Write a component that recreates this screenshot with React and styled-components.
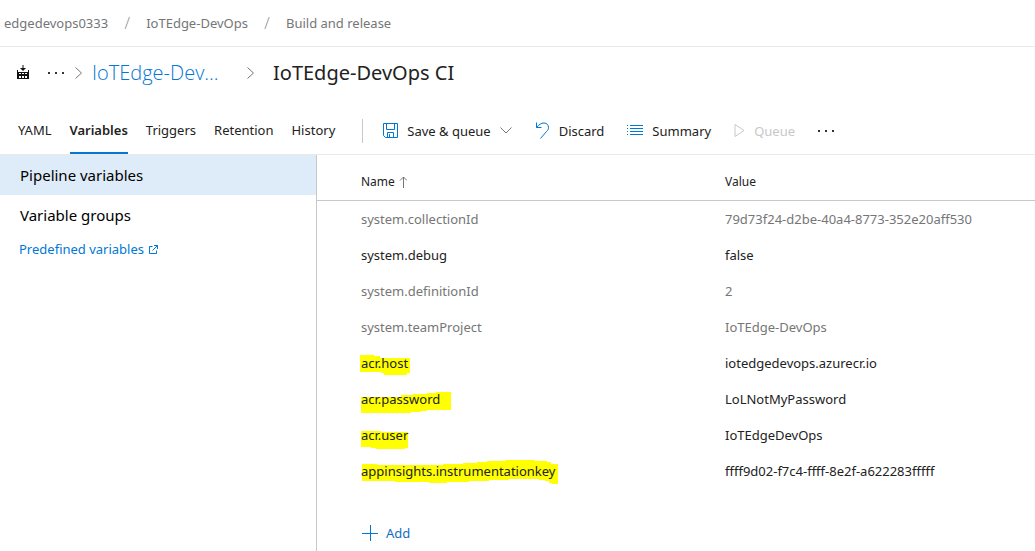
import React from "react";
import styled, { createGlobalStyle } from "styled-components";

const Global = createGlobalStyle`
  *, *::before, *::after { box-sizing: border-box; }
  body { margin: 0; background: #fff; color: #222; font: 13px/20px "Noto Sans", "Open Sans", sans-serif; }
  button { font: inherit; color: inherit; background: none; border: 0; padding: 0; margin: 0; cursor: pointer; }
  a { text-decoration: none; color: inherit; }
  svg { display: block; flex: none; }
`;

const Page = styled.div`
  min-height: 100vh;
  display: flex;
  flex-direction: column;
`;

const Breadcrumbs = styled.nav`
  display: flex;
  align-items: center;
  height: 47px;
  padding: 0 4px;
  border-bottom: 1px solid #eaeaea;
  color: #767676;
`;

const Slash = styled.span`
  width: 38px;
  text-align: center;
  font-family: "Open Sans", "Noto Sans", sans-serif;
  font-size: 16px;
  font-weight: 300;
  color: #888;
`;

const TitleBar = styled.header`
  display: flex;
  align-items: center;
  height: 52px;
  padding: 0 16px;
`;

const MoreButton = styled.button`
  display: flex;
  margin: 0 10px 0 18px;
`;

const ParentLink = styled.a`
  width: 138px;
  margin: 0 16px 0 9px;
  color: #0078d4;
  font-family: "Open Sans", "Noto Sans", sans-serif;
  font-size: 20px;
  line-height: 28px;
  font-weight: 300;
`;

const Title = styled.h1`
  margin: 0 0 0 18px;
  font-size: 20px;
  line-height: 28px;
  font-weight: 400;
`;

const CommandBar = styled.div`
  display: flex;
  align-items: stretch;
  height: 56px;
  padding: 8px 18px 0;
  border-bottom: 1px solid #eaeaea;
`;

const Tab = styled.a`
  display: flex;
  align-items: center;
  margin-right: 18px;
  border-bottom: 2px solid ${(p) => (p.$active ? "#0078d4" : "transparent")};
  font-weight: ${(p) => (p.$active ? 600 : 400)};
`;

const Divider = styled.span`
  align-self: center;
  width: 1px;
  height: 24px;
  margin: 0 20px 0 9px;
  background: #c8c8c8;
`;

const Command = styled.button`
  display: flex;
  align-items: center;
  gap: 9px;
  margin-right: 23px;
  &:disabled { color: #c8c8c8; cursor: default; }
`;

const Body = styled.div`
  display: flex;
  flex: 1;
`;

const Sidebar = styled.nav`
  flex: none;
  width: 317px;
  border-right: 1px solid #c8c8c8;
`;

const SideItem = styled.a`
  display: flex;
  align-items: center;
  height: 40px;
  padding: 0 20px;
  font-size: 15px;
  color: #000;
  background: ${(p) => (p.$active ? "#deecf9" : "transparent")};
`;

const DocsLink = styled.a`
  display: flex;
  align-items: center;
  gap: 5px;
  padding: 4px 19px;
  color: #0078d4;
`;

const Main = styled.main`
  flex: 1;
  min-width: 0;
`;

const Table = styled.table`
  width: 100%;
  border-collapse: separate;
  border-spacing: 0;
  table-layout: fixed;
`;

const HeadCell = styled.th`
  width: ${(p) => p.$width || "auto"};
  height: 46px;
  padding: 8px 0 0 44px;
  border-bottom: 1px solid #c8c8c8;
  text-align: left;
  font-size: 12px;
  font-weight: 400;
`;

const Sort = styled.span`
  display: flex;
  align-items: center;
  gap: 4px;
`;

const Cell = styled.td`
  height: 36px;
  padding: 0 0 0 44px;
  color: ${(p) => (p.$muted ? "#767676" : "#222")};
`;

const Marked = styled.span`
  position: relative;
  display: inline-block;
`;

const MarkerStroke = styled.svg`
  position: absolute;
  left: -2px;
  top: -4px;
  z-index: -1;
`;

const AddButton = styled.button`
  display: flex;
  align-items: center;
  gap: 8px;
  margin: 34px 0 8px 45px;
  color: #106ebe;
`;

/* Highlighter strokes drawn behind the custom variable names */
const strokes = {
  host: "M1 6H15V7H21V9H51V24H48V26H25V24H22V23H1Z",
  password: "M2 12H42V10H54V9H68V8H77V7H92V25H68V26H62V27H52V28H2Z",
  user: "M2 10H22V11H49V27H46V28H17V27H12V26H2Z",
  key: "M3 7H18V8H84V7H104V6H118V5H128V4H146V3H176V4H188V5H192V7H199V27H193V26H190V24H186V23H180V22H150V23H130V24H110V25H88V26H70V25H36V24H3Z",
};

const rows = [
  { name: "system.collectionId", value: "79d73f24-d2be-40a4-8773-352e20aff530", muted: true },
  { name: "system.debug", value: "false" },
  { name: "system.definitionId", value: "2", muted: true },
  { name: "system.teamProject", value: "IoTEdge-DevOps", muted: true },
  { name: "acr.host", value: "iotedgedevops.azurecr.io", mark: "host" },
  { name: "acr.password", value: "LoLNotMyPassword", mark: "password" },
  { name: "acr.user", value: "IoTEdgeDevOps", mark: "user" },
  { name: "appinsights.instrumentationkey", value: "ffff9d02-f7c4-ffff-8e2f-a622283fffff", mark: "key" },
];

const Icon = ({ w, h, children, color = "#0078d4" }) => (
  <svg width={w} height={h} viewBox={`0 0 ${w} ${h}`} fill="none" stroke={color} aria-hidden="true">{children}</svg>
);

const BuildIcon = () => (
  <Icon w={14} h={18} color="none">
    <path fill="#111" fillRule="evenodd" d="M6.5 1h1v3H10L7 7 4 4h2.5zM1 6h1v2h10V6h1v9H1zM3 9v1h2V9zm3 0v1h2V9zm3 0v1h2V9zM3 12v2h2v-2zm3 0v2h2v-2zm3 0v2h2v-2z" />
  </Icon>
);
const Dots = () => (
  <Icon w={16} h={4} color="none"><path fill="#333" d="M0 1h2v2H0zM7 1h2v2H7zM14 1h2v2h-2z" /></Icon>
);
const Chevron = () => <Icon w={9} h={14} color="#767676"><path d="M1.5 1.5L7.5 7l-6 5.5" /></Icon>;

export default function App() {
  return (
    <Page>
      <Global />
      <Breadcrumbs aria-label="Breadcrumb">
        <a href="#org">edgedevops0333</a><Slash>/</Slash>
        <a href="#project">IoTEdge-DevOps</a><Slash>/</Slash>
        <a href="#build">Build and release</a>
      </Breadcrumbs>
      <TitleBar>
        <BuildIcon />
        <MoreButton aria-label="More"><Dots /></MoreButton>
        <Chevron />
        <ParentLink href="#parent">IoTEdge-Dev...</ParentLink>
        <Chevron />
        <Title>IoTEdge-DevOps CI</Title>
      </TitleBar>
      <CommandBar>
        <Tab href="#yaml">YAML</Tab>
        <Tab href="#variables" $active aria-current="page">Variables</Tab>
        <Tab href="#triggers">Triggers</Tab>
        <Tab href="#retention">Retention</Tab>
        <Tab href="#history">History</Tab>
        <Divider />
        <Command>
          <Icon w={15} h={15}><path d="M.5.5h14v14h-12l-2-2zM3.5.5v6h8v-6M4.5 14.5v-5h6v5M6.5 11v3" /></Icon>
          Save &amp; queue
          <Icon w={12} h={7} color="#767676"><path d="M.5.5L6 6 11.5.5" /></Icon>
        </Command>
        <Command>
          <Icon w={15} h={18}><path d="M1.5.5v5h5M1.5 5.5C4 2.5 6 1 9 1c3 0 4.5 2 4.5 4.5 0 2-1 3-2 4l-6 7" /></Icon>
          Discard
        </Command>
        <Command>
          <Icon w={16} h={14}><path d="M3 1.5h13M3 4.5h13M3 7.5h13M3 10.5h13M0 1.5h1M0 4.5h1M0 7.5h1M0 10.5h1" /></Icon>
          Summary
        </Command>
        <Command disabled>
          <Icon w={11} h={16} color="#c8c8c8"><path d="M1 1.5L10 7.5l-9 6z" /></Icon>
          Queue
        </Command>
        <Command aria-label="More commands"><Dots /></Command>
      </CommandBar>
      <Body>
        <Sidebar aria-label="Variable sections">
          <SideItem href="#pipeline" $active>Pipeline variables</SideItem>
          <SideItem href="#groups">Variable groups</SideItem>
          <DocsLink href="#predefined">
            Predefined variables
            <Icon w={9} h={9}><path d="M3.5 1.5h-3v7h7v-3M5 .5h3.5V4M8.5.5l-5 5" /></Icon>
          </DocsLink>
        </Sidebar>
        <Main>
          <Table>
            <thead>
              <tr>
                <HeadCell $width="364px">
                  <Sort>Name <Icon w={8} h={12} color="#767676"><path d="M4.5 12V1M1 4.5L4.5 1 8 4.5" /></Icon></Sort>
                </HeadCell>
                <HeadCell>Value</HeadCell>
              </tr>
            </thead>
            <tbody>
              {rows.map(({ name, value, muted, mark }) => (
                <tr key={name}>
                  <Cell $muted={muted}>
                    {mark ? (
                      <Marked>
                        <MarkerStroke width="200" height="30" fill="#ff0" aria-hidden="true"><path d={strokes[mark]} /></MarkerStroke>
                        {name}
                      </Marked>
                    ) : name}
                  </Cell>
                  <Cell $muted={muted}>{value}</Cell>
                </tr>
              ))}
            </tbody>
          </Table>
          <AddButton>
            <Icon w={16} h={16}><path d="M0 8.5h16M8.5 0v16" /></Icon>
            Add
          </AddButton>
        </Main>
      </Body>
    </Page>
  );
}
